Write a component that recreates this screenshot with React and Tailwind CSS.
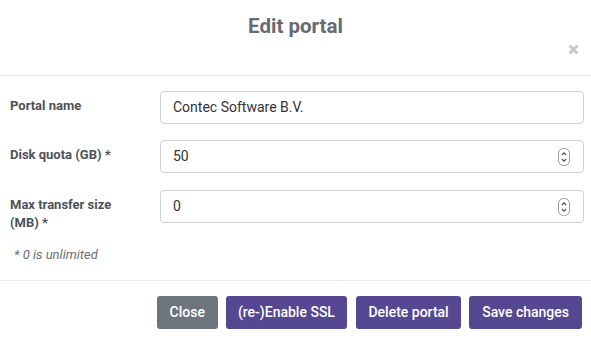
import React from 'react';

function Spinner() {
  return (
    <svg width="12" height="18" viewBox="0 0 12 18" className="shrink-0">
      <rect x="0.5" y="0.5" width="11" height="17" rx="5" fill="#fff" stroke="#9a9a9a" />
      <path d="M3.8 7 L6 4.8 L8.2 7" fill="none" stroke="#555" strokeWidth="1.1" />
      <path d="M3.8 11 L6 13.2 L8.2 11" fill="none" stroke="#555" strokeWidth="1.1" />
    </svg>
  );
}

function Field({ label, value, number }) {
  return (
    <div className="flex items-start">
      <label className="w-[150px] shrink-0 pt-[6px] pr-[26px] text-[13px] leading-[18px] font-bold text-[#4d5257]">
        {label}
      </label>
      <div className="flex h-[33px] flex-1 items-center rounded-[4px] border border-[#cfd2d6] bg-white pl-[12px] pr-[13px]">
        <span className="flex-1 text-[14px] text-[#333]">{value}</span>
        {number && <Spinner />}
      </div>
    </div>
  );
}

export default function App() {
  return (
    <div className="h-[339px] w-[591px] overflow-hidden bg-white font-['Roboto',sans-serif]">
      <div className="relative h-[76px] border-b border-[#e9ecef]">
        <h4 className="pt-[13px] text-center text-[20.5px] leading-[26px] font-bold text-[#666b71]">
          Edit portal
        </h4>
        <svg width="11" height="11" viewBox="0 0 11 11" className="absolute top-[44px] right-[12px]">
          <path d="M1.5 1.5 L9.5 9.5 M9.5 1.5 L1.5 9.5" stroke="#c9c9c9" strokeWidth="3" />
        </svg>
      </div>

      <div className="flex flex-col gap-[16px] border-b border-[#e9ecef] pt-[15px] pr-[7px] pb-[16px] pl-[10px]">
        <Field label="Portal name" value="Contec Software B.V." />
        <Field label="Disk quota (GB) *" value="50" number />
        <div className="mt-[1px]">
          <Field label="Max transfer size (MB) *" value="0" number />
        </div>
        <p className="-mt-[2px] pl-[4px] text-[13px] leading-[18px] italic text-[#6c6f73]">* 0 is unlimited</p>
      </div>

      <div className="flex justify-end gap-[8px] pt-[15px] pr-[9px]">
        <button className="h-[33px] rounded-[3px] bg-[#6c757d] px-[13px] text-[14px] font-medium text-white">
          Close
        </button>
        <button className="h-[33px] rounded-[3px] bg-[#564791] px-[12px] text-[14px] font-medium text-white">
          (re-)Enable SSL
        </button>
        <button className="ml-[1px] h-[33px] rounded-[3px] bg-[#564791] px-[12.5px] text-[14px] font-medium text-white">
          Delete portal
        </button>
        <button className="h-[33px] rounded-[3px] bg-[#564791] px-[13px] text-[14px] font-medium text-white">
          Save changes
        </button>
      </div>
    </div>
  );
}
